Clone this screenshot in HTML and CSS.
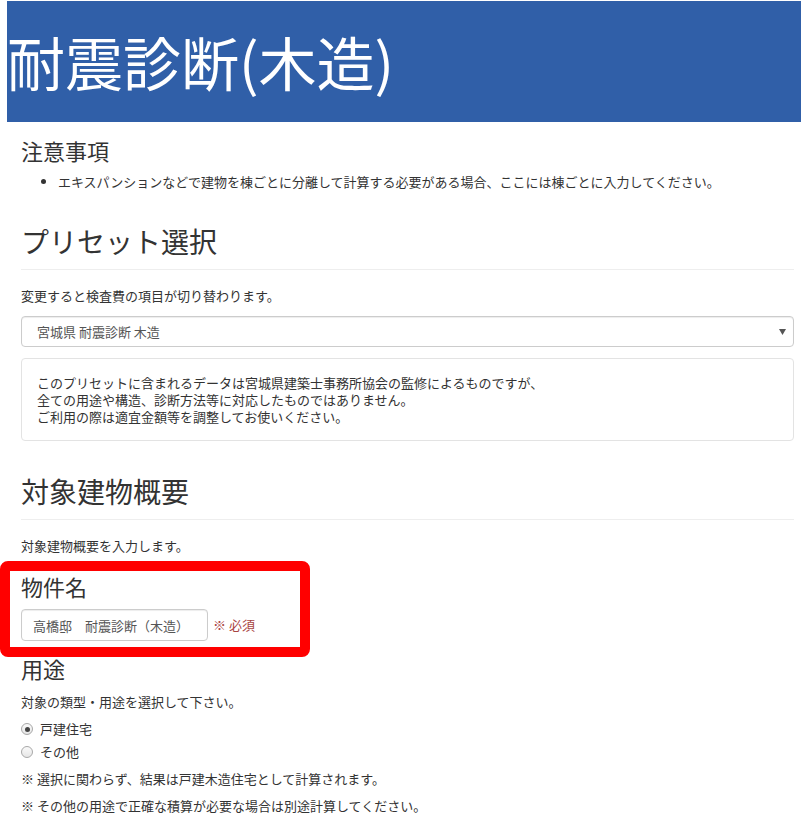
FILE: index.html
```html
<!DOCTYPE html>
<html lang="ja">
<head>
<meta charset="utf-8">
<title>耐震診断(木造)</title>
<link rel="stylesheet" href="styles.css">
</head>
<body>
<header class="banner">
  <h1 class="banner-title">耐震診断(木造)</h1>
</header>
<main class="content">
  <h3 class="sub-title">注意事項</h3>
  <ul class="notes">
    <li>エキスパンションなどで建物を棟ごとに分離して計算する必要がある場合、ここには棟ごとに入力してください。</li>
  </ul>

  <h2 class="section-title">プリセット選択</h2>
  <hr class="rule">
  <p class="help">変更すると検査費の項目が切り替わります。</p>
  <div class="select-box">
    <span class="select-text">宮城県 耐震診断 木造</span>
    <svg class="select-arrow" width="7" height="6" viewBox="0 0 7 6"><path d="M0 0H7L3.5 6Z" fill="#555"/></svg>
  </div>
  <div class="well">
    <div class="well-line">このプリセットに含まれるデータは宮城県建築士事務所協会の監修によるものですが、</div>
    <div class="well-line">全ての用途や構造、診断方法等に対応したものではありません。</div>
    <div class="well-line">ご利用の際は適宜金額等を調整してお使いください。</div>
  </div>

  <h2 class="section-title section-title-2">対象建物概要</h2>
  <hr class="rule">
  <p class="help">対象建物概要を入力します。</p>

  <div class="field-group">
    <h3 class="sub-title field-title">物件名</h3>
    <div class="field-row">
      <input class="text-input" type="text" value="高橋邸　耐震診断（木造）">
      <span class="required">※ 必須</span>
    </div>
    <div class="highlight"></div>
  </div>

  <h3 class="sub-title use-title">用途</h3>
  <p class="help help-tight">対象の類型・用途を選択して下さい。</p>
  <div class="radio-row"><span class="radio radio-checked"></span><span>戸建住宅</span></div>
  <div class="radio-row radio-row-2"><span class="radio"></span><span>その他</span></div>
  <p class="note">※ 選択に関わらず、結果は戸建木造住宅として計算されます。</p>
  <p class="note">※ その他の用途で正確な積算が必要な場合は別途計算してください。</p>
</main>
</body>
</html>
```

FILE: styles.css
```css
html, body {
  margin: 0;
  padding: 0;
  background: #fff;
}
body {
  font-family: "Noto Sans CJK JP", "Noto Sans", sans-serif;
  color: #333;
  font-size: 13px;
  line-height: 20px;
}
.banner {
  margin: 1px 0 0 7px;
  height: 121px;
  background: #305fa8;
  display: flex;
  align-items: center;
}
.banner-title {
  margin: 0;
  color: #fff;
  font-weight: 400;
  font-size: 58px;
  line-height: 70px;
  position: relative;
  top: -1px;
}
.content {
  padding: 0 7px 20px 21px;
}
.sub-title {
  margin: 13px 0 0;
  font-size: 22px;
  line-height: 30px;
  font-weight: 400;
}
.notes {
  margin: 7px 0 0;
  padding-left: 37px;
}
.notes li {
  font-size: 13px;
  line-height: 20px;
}
.section-title {
  margin: 29px 0 0;
  font-size: 28px;
  line-height: 40px;
  font-weight: 400;
}
.rule {
  margin: 8px 0 0;
  border: 0;
  border-top: 1px solid #eee;
  height: 0;
}
.help {
  margin: 16px 0 0;
}
.select-box {
  margin-top: 10px;
  height: 31px;
  box-sizing: border-box;
  border: 1px solid #ccc;
  border-radius: 4px;
  box-shadow: inset 0 1px 1px rgba(0,0,0,.075);
  display: flex;
  align-items: center;
  justify-content: space-between;
  padding: 0 7px 0 15px;
  color: #555;
}
.select-arrow {
  display: block;
}
.well {
  margin-top: 11px;
  border: 1px solid #e3e3e3;
  border-radius: 4px;
  padding: 15px 15px;
  color: #333;
}
.well-line {
  line-height: 17px;
}
.section-title-2 {
  margin-top: 30px;
}
.field-group {
  position: relative;
}
.field-title {
  margin-top: 15px;
}
.field-row {
  display: flex;
  align-items: center;
  gap: 5px;
  margin-top: 8px;
}
.text-input {
  width: 187px;
  height: 32px;
  box-sizing: border-box;
  border: 1px solid #ccc;
  border-radius: 4px;
  box-shadow: inset 0 1px 1px rgba(0,0,0,.075);
  padding: 0 11px;
  font-family: "Noto Sans CJK JP", "Noto Sans", sans-serif;
  font-size: 13px;
  color: #555;
  margin: 0;
}
.required {
  color: #a94442;
}
.highlight {
  position: absolute;
  left: -21px;
  top: -10px;
  width: 310px;
  height: 96px;
  box-sizing: border-box;
  border: 10px solid #ff0000;
  border-radius: 8px;
  pointer-events: none;
}
.use-title {
  margin-top: 12px;
}
.help-tight {
  margin-top: 9px;
}
.radio-row {
  display: flex;
  align-items: center;
  gap: 7px;
  margin-top: 7px;
}
.radio-row-2 {
  margin-top: 3px;
}
.radio {
  width: 12px;
  height: 12px;
  box-sizing: border-box;
  border: 1px solid #a8a8a8;
  border-radius: 50%;
  background: linear-gradient(#fafafa, #e6e6e6);
  display: inline-flex;
  align-items: center;
  justify-content: center;
}
.radio-checked::after {
  content: "";
  width: 5px;
  height: 5px;
  border-radius: 50%;
  background: #444;
}
.note {
  margin: 7px 0 0;
}
```
